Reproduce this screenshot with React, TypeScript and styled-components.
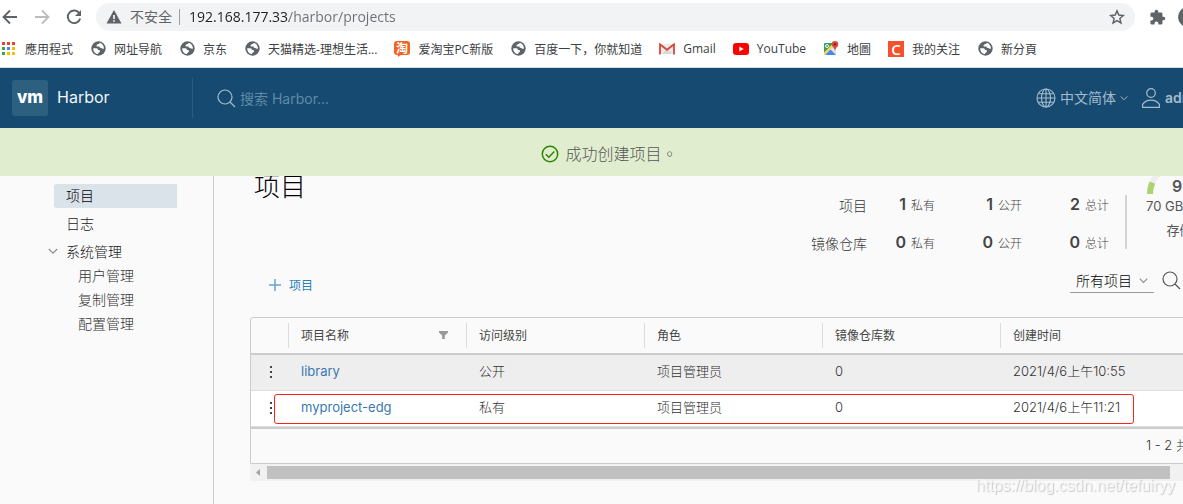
import React from "react";
import styled, { createGlobalStyle, css } from "styled-components";

const GlobalStyle = createGlobalStyle`
  *, *::before, *::after { box-sizing: border-box; }
  html, body, #root { height: 100%; }
  body { margin: 0; overflow: hidden; background: #fafafa; color: #565656; font-family: Inter, "Noto Sans CJK SC", sans-serif; font-size: 13px; }
  button, input, select { font: inherit; color: inherit; }
  button { background: none; border: 0; padding: 0; cursor: pointer; }
  a { text-decoration: none; color: inherit; }
  svg { display: block; flex: none; }
`;

const Page = styled.div`
  display: flex;
  flex-direction: column;
  width: calc(100% + 100px);
  min-height: 100%;
  white-space: nowrap;
`;

/* Browser chrome */
const BrowserBar = styled.div`
  display: flex;
  align-items: center;
  height: 34px;
  background: #fff;
  color: #5f6368;
`;
const NavButton = styled.button<{ $dim?: boolean }>`
  display: grid;
  place-items: center;
  width: 20px;
  height: 20px;
  margin-right: 12px;
  color: ${(p) => (p.$dim ? "#babcbe" : "#5f6368")};
`;
const AddressBar = styled.div`
  display: flex;
  align-items: center;
  flex: 1;
  height: 28px;
  margin-right: 14px;
  padding: 0 10px;
  border-radius: 14px;
  background: #f1f3f4;
  font-family: "Open Sans", "Noto Sans CJK SC", sans-serif;
  font-size: 14px;
`;
const Insecure = styled.span`
  margin-left: 8px;
  padding-right: 7px;
  border-right: 1px solid #9aa0a6;
  line-height: 16px;
`;
const UrlInput = styled.input`
  flex: 1;
  min-width: 0;
  margin-left: 9px;
  padding: 0 0 2px;
  border: 0;
  outline: 0;
  color: transparent;
  background: linear-gradient(90deg, #202124 100px, #6b6f74 100px);
  background-clip: text;
`;
const BrowserTools = styled.div`
  display: flex;
  align-items: center;
  gap: 12px;
  width: 134px;
`;
const Avatar = styled.button`
  width: 20px;
  height: 20px;
  border-radius: 50%;
  background: #5f6368;
`;
const Bookmarks = styled.nav`
  display: flex;
  align-items: center;
  height: 34px;
  padding: 0 0 4px 1px;
  border-bottom: 1px solid #d5dade;
  background: #fff;
  color: #3c4043;
  font-family: "Open Sans", "Noto Sans CJK SC", sans-serif;
  font-size: 12px;
`;
const Bookmark = styled.a`
  display: flex;
  align-items: center;
  gap: 8px;
  margin-right: 17px;
`;
const BookmarkIcon = styled.span`
  display: grid;
  place-items: center;
  width: 16px;
`;

/* Application header */
const Header = styled.header`
  display: flex;
  align-items: center;
  height: 60px;
  background: #174a70;
  color: #a3bccd;
`;
const Brand = styled.a`
  display: flex;
  align-items: center;
  gap: 9px;
  width: 193px;
  height: 40px;
  padding-left: 12px;
  border-right: 1px solid #2b5c7f;
  color: #f2f6f8;
  font-size: 16px;
  line-height: 20px;
`;
const BrandName = styled.span`
  padding-bottom: 2px;
`;
const Logo = styled.span`
  display: grid;
  place-items: center;
  width: 36px;
  height: 36px;
  padding-bottom: 2px;
  border-radius: 3px;
  background: #2d607f;
  color: #fff;
  font-size: 17px;
  font-weight: 800;
`;
const Search = styled.label`
  display: flex;
  align-items: center;
  gap: 4px;
  flex: 1;
  padding-left: 24px;
  font-size: 14px;
  input {
    flex: 1;
    padding: 0;
    border: 0;
    outline: 0;
    background: none;
  }
  input::placeholder { color: #5e8ba6; opacity: 1; }
`;
const HeaderMenu = styled.button<{ $bold?: boolean }>`
  display: flex;
  align-items: center;
  gap: 4px;
  margin-right: 13px;
  font-size: 14px;
  line-height: 20px;
  font-weight: ${(p) => (p.$bold ? 600 : 400)};
`;
const HeaderMenus = styled.div`
  display: flex;
  width: 247px;
`;

const Banner = styled.div`
  display: flex;
  align-items: center;
  justify-content: center;
  gap: 6px;
  height: 48px;
  padding: 4px 64px 0 0;
  background: #e0eecf;
  color: #565656;
  font-size: 16px;
  font-weight: 300;
  line-height: 24px;
  z-index: 1;
`;
const BannerText = styled.span`
  padding-bottom: 2px;
`;
const FullStop = styled.span`
  font-family: "Noto Sans CJK TC", sans-serif;
`;

/* Body */
const Body = styled.div`
  display: flex;
  flex: 1;
`;
const Sidebar = styled.nav`
  width: 214px;
  padding: 8px 36px 0 54px;
  border-right: 1px solid #ccc;
`;
const linkBase = css`
  display: block;
  height: 24px;
  line-height: 23px;
  font-size: 14px;
`;
const SideLink = styled.a<{ $active?: boolean }>`
  ${linkBase}
  margin-bottom: 4px;
  padding-left: 12px;
  border-radius: 3px 0 0 3px;
  color: ${(p) => (p.$active ? "#000" : "#222")};
  background: ${(p) => (p.$active ? "#dae3ea" : "transparent")};
  font-weight: 300;
`;
const SubLink = styled.a`
  ${linkBase}
  padding-left: 24px;
  color: #333;
  font-weight: 300;
`;
const GroupToggle = styled.button`
  display: flex;
  align-items: center;
  gap: 8px;
  height: 24px;
  margin-left: -6px;
  padding-bottom: 2px;
  color: #111;
  font-size: 14px;
  font-weight: 300;
`;
const Main = styled.main`
  flex: 1;
  padding: 0 36px;
`;
const Summary = styled.div`
  display: flex;
  align-items: flex-start;
  height: 88px;
`;
const Title = styled.h2`
  flex: 1;
  margin: -10px 0 0 4px;
  color: #000;
  font-size: 26px;
  font-weight: 300;
  line-height: 42px;
`;
const Stats = styled.dl`
  display: grid;
  grid-template-columns: 56px 84px 87px 87px;
  row-gap: 14px;
  margin: 18px 0 0;
  line-height: 24px;
`;
const StatLabel = styled.dt`
  font-size: 14px;
  font-weight: 300;
  color: #333;
  text-align: right;
`;
const Stat = styled.dd`
  display: flex;
  justify-content: flex-end;
  align-items: baseline;
  gap: 5px;
  margin: 0;
  padding-right: 16px;
  font-size: 12px;
  font-weight: 300;
  line-height: 20px;
  color: #444;
  b { font-size: 16px; font-weight: 600; }
`;
const Quota = styled.div`
  width: 122px;
  margin: 19px 0 0;
  padding-left: 19px;
  border-left: 2px solid #d3d3d3;
  height: 54px;
`;
const QuotaBody = styled.div`
  display: grid;
  width: 64px;
  margin-top: -33px;
  justify-items: center;
  line-height: 24px;
`;
const Gauge = styled.svg`
  grid-area: 1 / 1;
`;
const QuotaValue = styled.b`
  grid-area: 1 / 1;
  align-self: end;
  justify-self: start;
  margin-left: 26px;
  font-size: 16px;
  font-weight: 600;
  line-height: 16px;
`;

const Toolbar = styled.div`
  display: flex;
  align-items: center;
  justify-content: space-between;
  height: 53px;
  padding-bottom: 20px;
`;
const NewProject = styled.button`
  display: flex;
  align-items: center;
  gap: 8px;
  margin: 8px 0 0 19px;
  color: #2d7fb8;
  font-size: 12px;
`;
const Filters = styled.div`
  display: flex;
  align-items: center;
  gap: 8px;
  width: 177px;
`;
const SelectBox = styled.span`
  display: grid;
  align-items: center;
  width: 84px;
  border-bottom: 1px solid #9a9a9a;
  select {
    grid-area: 1 / 1;
    height: 23px;
    padding: 0 6px;
    border: 0;
    outline: 0;
    appearance: none;
    background: none;
    color: #000;
    font-size: 14px;
    font-weight: 300;
  }
  svg { grid-area: 1 / 1; justify-self: end; margin-right: 6px; pointer-events: none; }
`;

const GridWrap = styled.div`
  position: relative;
`;
const Grid = styled.div`
  border: 1px solid #ccc;
  border-radius: 3px 3px 0 0;
`;
const Table = styled.table`
  width: 100%;
  table-layout: fixed;
  border-collapse: separate;
  border-spacing: 0;
  text-align: left;
`;
const Th = styled.th<{ $w?: number }>`
  width: ${(p) => (p.$w ? `${p.$w}px` : "auto")};
  height: 37px;
  padding: 0;
  border-bottom: 2px solid #ccc;
  font-size: 12px;
  font-weight: 400;
  color: #454545;
`;
const ThInner = styled.div`
  display: flex;
  align-items: center;
  justify-content: space-between;
  height: 25px;
  padding: 0 18px 2px 12px;
  border-left: 1px solid #ddd;
`;
const Tr = styled.tr<{ $hover?: boolean }>`
  background: ${(p) => (p.$hover ? "#eee" : "#fff")};
  td {
    height: 36px;
    padding: 0 0 3px 13px;
    border-bottom: 1px solid #ddd;
    color: #333;
    font-weight: 300;
    line-height: 16px;
  }
  a { color: #3a78b0; font-weight: 400; }
`;
const RowMenu = styled.button`
  display: block;
  margin: 2px 0 0 4px;
`;
const GridFooter = styled.div`
  display: flex;
  justify-content: flex-end;
  height: 36px;
  border-top: 2px solid #ccc;
  line-height: 32px;
  font-weight: 300;
  color: #333;
`;
const PageInfo = styled.span`
  width: 100px;
`;
const RowMark = styled.div`
  position: absolute;
  top: 77px;
  left: 24px;
  right: 113px;
  height: 30px;
  border: 1px solid #f5251b;
  border-radius: 3px;
  pointer-events: none;
`;
const ScrollTrack = styled.div`
  display: flex;
  align-items: center;
  height: 17px;
  padding: 0 77px 0 6px;
  background: #f1f1f1;
`;
const ScrollThumb = styled.div`
  flex: 1;
  height: 13px;
  margin-left: 7px;
  background: #c1c1c1;
`;
const Watermark = styled.div`
  position: fixed;
  right: 8px;
  bottom: 6px;
  color: #f6f6f6;
  font: 16px/24px "Liberation Sans", sans-serif;
  text-shadow: 1px 1px 1px #c8c8c8;
`;

const GlobeFavicon = () => (
  <svg width="15" height="15" viewBox="0 0 24 24" aria-hidden="true">
    <circle cx="12" cy="12" r="11.5" fill="#5f6368" />
    <path d="M3.500 11.500h5.200c2 0 1.800 2.600 3.400 2.800 1.800.2 2.600.6 2.300 2.100-.3 1.700-2.700 1.800-3.300 4.400C6.500 20.500 3.500 16.500 3.500 11.500zM11 5.200c1.800-.4 2.300-2 3.700-2 3.800 1.300 6.200 4.900 6 8.600-1.700 1.400-2.900-.6-4.700-.7-1.800 0-2.500-.9-2.500-2.300H10c-1.600 0-1.900-3.100 1-3.600z" fill="#fff" />
  </svg>
);
const AppsIcon = () => (
  <svg width="14" height="14" viewBox="0 0 14 14" aria-hidden="true">
    {["#ea4335", "#ea4335", "#ea4335", "#34a853", "#4285f4", "#fbbc05", "#34a853", "#fbbc05", "#fbbc05"].map((c, i) => (
      <rect key={i} x={(i % 3) * 5} y={Math.floor(i / 3) * 5} width="3" height="3" fill={c} />
    ))}
  </svg>
);
const TaobaoIcon = () => (
  <svg width="16" height="16" viewBox="0 0 16 16" aria-hidden="true">
    <path d="M3 0h10a3 3 0 0 1 3 3v8a3 3 0 0 1-3 3H6.500L4.500 16l-.8-2H3a3 3 0 0 1-3-3V3a3 3 0 0 1 3-3z" fill="#f06423" />
    <text x="8" y="11.500" textAnchor="middle" fontSize="12" fontWeight="700" fill="#fff" fontFamily="Noto Sans CJK SC, sans-serif">淘</text>
  </svg>
);
const CsdnBox = styled.span`
  display: grid;
  place-items: center;
  width: 16px;
  height: 16px;
  background: #f4522e;
  color: #fff;
  font-size: 15px;
  font-weight: 600;
  line-height: 14px;
`;
const GmailIcon = () => (
  <svg width="16" height="12" viewBox="0 0 16 12" aria-hidden="true">
    <path d="M1 1h14v10H1z" fill="#e9e9e9" />
    <path d="M3 11l5-5 5 5z" fill="#d8d8d8" />
    <path d="M1 11.500V1.300l7 5.500 7-5.500v10.200" fill="none" stroke="#d5483b" strokeWidth="1.800" />
  </svg>
);
const YouTubeIcon = () => (
  <svg width="16" height="12" viewBox="0 0 16 12" aria-hidden="true">
    <rect width="16" height="12" rx="3" fill="#f00" />
    <path d="M6.300 3.400v5.200L10.700 6z" fill="#fff" />
  </svg>
);
const MapsIcon = () => (
  <svg width="16" height="16" viewBox="0 0 16 16" aria-hidden="true">
    <rect x="1" y="2" width="12" height="12" rx="1" fill="#dfe2e4" />
    <path d="M2 2h9L1 12V3a1 1 0 0 1 1-1z" fill="#34a05a" />
    <path d="M2 14l5.500-5.500L13 14z" fill="#4688f1" />
    <path d="M1 11.500L10.500 2l1.500 1.500L1.800 14z" fill="#fbd04a" />
    <circle cx="4" cy="5" r="1.500" fill="none" stroke="#fff" />
    <path d="M12 0a3.300 3.300 0 0 1 3.300 3.300C15.300 6 12.500 6.500 12 10c-.5-3.500-3.300-4-3.300-6.700A3.300 3.300 0 0 1 12 0z" fill="#dd4b3e" />
    <circle cx="12" cy="3.300" r="1.200" fill="#7d2720" />
  </svg>
);
const Chevron = ({ size = 9, color = "currentColor" }: { size?: number; color?: string }) => (
  <svg width={size} height={size} viewBox="0 0 10 10" fill="none" stroke={color} strokeWidth="1.200" aria-hidden="true">
    <path d="M.8 3L5 7.200 9.200 3" />
  </svg>
);
const Magnifier = ({ color }: { color: string }) => (
  <svg width="19" height="19" viewBox="0 0 19 19" fill="none" stroke={color} strokeWidth="1.200" aria-hidden="true">
    <circle cx="8" cy="8" r="7" />
    <path d="M13 13l5 5" />
  </svg>
);

const bookmarks: { label: string; icon: React.ReactNode }[] = [
  { label: "應用程式", icon: <AppsIcon /> },
  { label: "网址导航", icon: <GlobeFavicon /> },
  { label: "京东", icon: <GlobeFavicon /> },
  { label: "天猫精选-理想生活...", icon: <GlobeFavicon /> },
  { label: "爱淘宝PC新版", icon: <TaobaoIcon /> },
  { label: "百度一下，你就知道", icon: <GlobeFavicon /> },
  { label: "Gmail", icon: <GmailIcon /> },
  { label: "YouTube", icon: <YouTubeIcon /> },
  { label: "地圖", icon: <MapsIcon /> },
  { label: "我的关注", icon: <CsdnBox>C</CsdnBox> },
  { label: "新分頁", icon: <GlobeFavicon /> },
];

const stats: { label: string; values: number[] }[] = [
  { label: "项目", values: [1, 1, 2] },
  { label: "镜像仓库", values: [0, 0, 0] },
];
const statUnits = ["私有", "公开", "总计"];

const projects = [
  { name: "library", access: "公开", role: "项目管理员", repos: 0, created: "2021/4/6上午10:55" },
  { name: "myproject-edg", access: "私有", role: "项目管理员", repos: 0, created: "2021/4/6上午11:21" },
];

export default function App() {
  return (
    <>
      <GlobalStyle />
      <Page>
        <BrowserBar>
          <NavButton aria-label="Back">
            <svg width="16" height="16" viewBox="0 0 16 16" fill="none" stroke="currentColor" strokeWidth="1.800"><path d="M15 8H2M8 1.500L1.500 8 8 14.500" /></svg>
          </NavButton>
          <NavButton aria-label="Forward" $dim>
            <svg width="16" height="16" viewBox="0 0 16 16" fill="none" stroke="currentColor" strokeWidth="1.800"><path d="M1 8h13M8 1.500L14.500 8 8 14.500" /></svg>
          </NavButton>
          <NavButton aria-label="Reload">
            <svg width="16" height="16" viewBox="0 0 16 16" fill="none" stroke="currentColor" strokeWidth="1.900"><path d="M13.500 4.500A6.300 6.300 0 1 0 14.200 9.500" /><path d="M15 1v6H9z" fill="currentColor" stroke="none" /></svg>
          </NavButton>
          <AddressBar>
            <svg width="16" height="14" viewBox="0 0 16 14" aria-hidden="true"><path d="M8 0l7.500 13.500H.5z" fill="#5f6368" /><path d="M7.200 5h1.600v4H7.200zM7.200 10.200h1.600v1.600H7.200z" fill="#fff" /></svg>
            <Insecure>不安全</Insecure>
            <UrlInput aria-label="Address" defaultValue="192.168.177.33/harbor/projects" />
            <button aria-label="Bookmark this page">
              <svg width="16" height="16" viewBox="0 0 24 24" fill="none" stroke="#5f6368" strokeWidth="2.200"><path d="M12 2.800l2.700 6.300 6.800.6-5.200 4.500 1.600 6.700L12 17.300l-5.900 3.600 1.600-6.700L2.500 9.700l6.800-.6z" /></svg>
            </button>
          </AddressBar>
          <BrowserTools>
            <button aria-label="Extensions">
              <svg width="17" height="17" viewBox="0 0 24 24" fill="#5f6368"><path d="M20.500 11H19V7a2 2 0 0 0-2-2h-4V3.500a2.500 2.500 0 0 0-5 0V5H4a2 2 0 0 0-2 2v3.800h1.500a2.700 2.700 0 0 1 0 5.400H2V20a2 2 0 0 0 2 2h3.800v-1.500a2.700 2.700 0 0 1 5.400 0V22H17a2 2 0 0 0 2-2v-4h1.500a2.500 2.500 0 0 0 0-5z" /></svg>
            </button>
            <Avatar aria-label="Profile" />
          </BrowserTools>
        </BrowserBar>
        <Bookmarks aria-label="Bookmarks">
          {bookmarks.map((b) => (
            <Bookmark key={b.label} href="#"><BookmarkIcon>{b.icon}</BookmarkIcon>{b.label}</Bookmark>
          ))}
        </Bookmarks>

        <Header>
          <Brand href="#"><Logo>vm</Logo><BrandName>Harbor</BrandName></Brand>
          <Search>
            <Magnifier color="#a3bccd" />
            <input aria-label="搜索" placeholder="搜索 Harbor..." />
          </Search>
          <HeaderMenus>
            <HeaderMenu>
              <svg width="20" height="20" viewBox="0 0 20 20" fill="none" stroke="currentColor" strokeWidth="1.100" aria-hidden="true">
                <circle cx="10" cy="10" r="9" /><ellipse cx="10" cy="10" rx="4.500" ry="9" /><path d="M10 1v18M1 10h18M2.300 5.800h15.400M2.300 14.200h15.400" />
              </svg>
              <span>中文简体</span><Chevron size={8} />
            </HeaderMenu>
            <HeaderMenu $bold>
              <svg width="20" height="20" viewBox="0 0 20 20" fill="none" stroke="currentColor" strokeWidth="1.200" aria-hidden="true">
                <circle cx="10" cy="5" r="4.300" /><path d="M1.600 19.300v-3c2-2.700 5-4.200 8.400-4.200s6.400 1.500 8.400 4.200v3z" />
              </svg>
              <span>admin</span><Chevron size={8} />
            </HeaderMenu>
          </HeaderMenus>
        </Header>

        <Banner role="status">
          <svg width="18" height="18" viewBox="0 0 18 18" fill="none" stroke="#2f8400" strokeWidth="1.500" aria-hidden="true">
            <circle cx="9" cy="9" r="7.700" /><path d="M4.800 9.200l3 3 5.500-5.700" />
          </svg>
          <BannerText>成功创建项目<FullStop lang="zh-TW">。</FullStop></BannerText>
        </Banner>

        <Body>
          <Sidebar>
            <SideLink href="#" $active>项目</SideLink>
            <SideLink href="#">日志</SideLink>
            <GroupToggle><Chevron size={10} color="#8c8c8c" />系统管理</GroupToggle>
            <SubLink href="#">用户管理</SubLink>
            <SubLink href="#">复制管理</SubLink>
            <SubLink href="#">配置管理</SubLink>
          </Sidebar>
          <Main>
            <Summary>
              <Title>项目</Title>
              <Stats>
                {stats.map((s) => (
                  <React.Fragment key={s.label}>
                    <StatLabel>{s.label}</StatLabel>
                    {s.values.map((v, i) => (
                      <Stat key={statUnits[i]}><b>{v}</b>{statUnits[i]}</Stat>
                    ))}
                  </React.Fragment>
                ))}
              </Stats>
              <Quota>
                <QuotaBody>
                  <Gauge width="64" height="32" viewBox="0 0 64 32" fill="none" strokeWidth="6" aria-hidden="true">
                    <path d="M3 32a29 29 0 0 1 58 0" stroke="#eee" />
                    <path d="M3 32a29 29 0 0 1 2.300-11.300" stroke="#aad46f" />
                  </Gauge>
                  <QuotaValue>9 GB</QuotaValue>
                  <span>70 GB 容量</span>
                  <span>存储</span>
                </QuotaBody>
              </Quota>
            </Summary>
            <Toolbar>
              <NewProject>
                <svg width="12" height="12" viewBox="0 0 12 12" stroke="#6ba5d0" strokeWidth="1.500" aria-hidden="true"><path d="M6 0v12M0 6h12" /></svg>
                项目
              </NewProject>
              <Filters>
                <SelectBox>
                  <select aria-label="项目筛选"><option>所有项目</option></select>
                  <Chevron color="#8c8c8c" />
                </SelectBox>
                <button aria-label="搜索项目"><Magnifier color="#565656" /></button>
              </Filters>
            </Toolbar>
            <GridWrap>
              <Grid>
                <Table>
                  <thead>
                    <tr>
                      <Th $w={37} aria-label="操作" />
                      <Th $w={178}>
                        <ThInner>
                          项目名称
                          <button aria-label="筛选"><svg width="9" height="8" viewBox="0 0 9 8"><path d="M0 0h9v1.500L5.800 4.500V8H3.200V4.500L0 1.500z" fill="#9a9a9a" /></svg></button>
                        </ThInner>
                      </Th>
                      <Th $w={178}><ThInner>访问级别</ThInner></Th>
                      <Th $w={178}><ThInner>角色</ThInner></Th>
                      <Th $w={178}><ThInner>镜像仓库数</ThInner></Th>
                      <Th><ThInner>创建时间</ThInner></Th>
                    </tr>
                  </thead>
                  <tbody>
                    {projects.map((p, i) => (
                      <Tr key={p.name} $hover={i === 0}>
                        <td>
                          <RowMenu aria-label="操作"><svg width="6" height="14" viewBox="0 0 6 14" fill="#454545"><path d="M2 1h2v2H2zM2 6h2v2H2zM2 11h2v2H2z" /></svg></RowMenu>
                        </td>
                        <td><a href="#">{p.name}</a></td>
                        <td>{p.access}</td>
                        <td>{p.role}</td>
                        <td>{p.repos}</td>
                        <td>{p.created}</td>
                      </Tr>
                    ))}
                  </tbody>
                </Table>
                <GridFooter><PageInfo>1 - 2 共计 2 条记录</PageInfo></GridFooter>
              </Grid>
              <RowMark />
              <ScrollTrack>
                <svg width="4" height="7" viewBox="0 0 4 7" aria-hidden="true"><path d="M4 0v7L0 3.500z" fill="#a3a3a3" /></svg>
                <ScrollThumb />
              </ScrollTrack>
            </GridWrap>
          </Main>
        </Body>
        <Watermark>https://blog.csdn.net/tefuiryy</Watermark>
      </Page>
    </>
  );
}
